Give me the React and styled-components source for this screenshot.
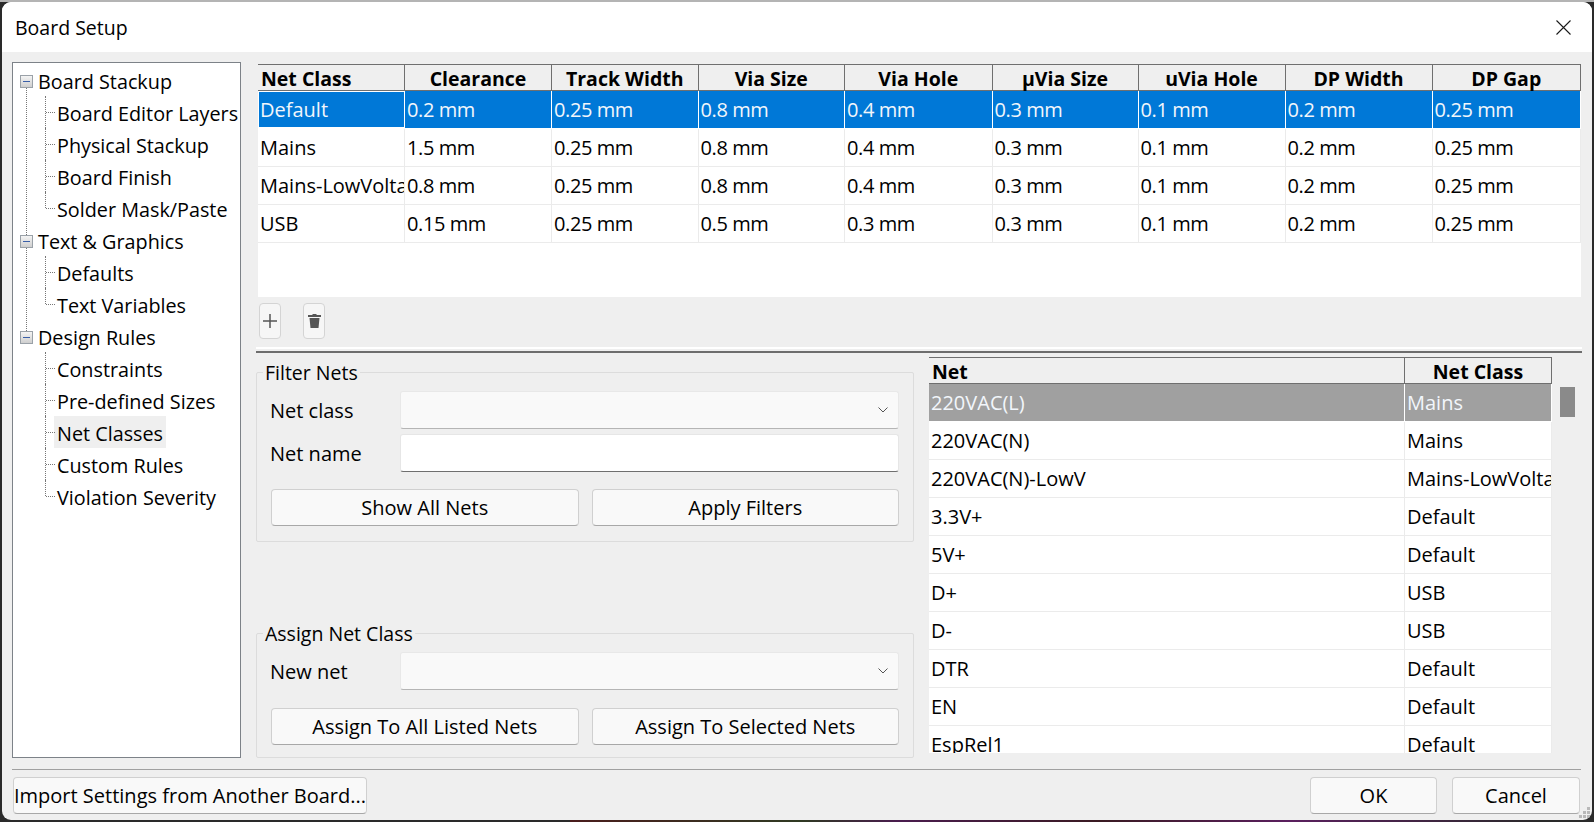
import React from 'react';
import styled, { createGlobalStyle } from 'styled-components';

const GlobalStyle = createGlobalStyle`
  html, body {
    margin: 0;
    height: 100%;
    background: #262626;
    overflow: hidden;
  }
  * { box-sizing: border-box; }
`;

const FONT = `"Open Sans", "Noto Sans", "Liberation Sans", sans-serif`;

const Desktop = styled.div`
  width: 1594px;
  height: 822px;
  padding: 2px;
  background:
    linear-gradient(90deg, transparent 570px, #4a1c1c 570px, #2f3a22 800px, #4a1c4e 900px, #3a1a22 1100px, #5a1f5e 1290px, #2a2a2a 1540px) left bottom / 100% 2px no-repeat,
    linear-gradient(#b4b4b4 0 2px, #2a2a2a 2px);
`;

const Window = styled.div`
  width: 1590px;
  height: 818px;
  display: flex;
  flex-direction: column;
  background: #efefef;
  border-radius: 9px;
  overflow: hidden;
  position: relative;
  font: 400 20px/24px ${FONT};
  color: #000;
`;

const TitleBar = styled.header`
  height: 50px;
  flex: none;
  background: #fff;
  display: flex;
  align-items: center;
  justify-content: space-between;
  padding: 0 21px 0 13px;
`;

const Title = styled.span`
  font-size: 19.5px;
  margin-top: 1px;
`;

const CloseIcon = styled.svg`
  width: 15px;
  height: 15px;
  stroke: #1a1a1a;
  stroke-width: 1.1;
  fill: none;
`;

const Content = styled.div`
  flex: 1;
  min-height: 0;
  display: flex;
  padding: 10px 10px 0 10px;
`;

const Tree = styled.nav`
  width: 229px;
  height: 696px;
  flex: none;
  background: #fff;
  border: 1px solid #7d8288;
  padding: 1px 0 0 0;
  font-size: 19.8px;
`;

const TreeRow = styled.div`
  height: 32px;
  display: flex;
  align-items: flex-start;
  position: relative;
  padding-left: ${(p) => (p.$child ? 44 : 25)}px;
  white-space: nowrap;

  ${(p) => p.$child && `
    &::before {
      content: '';
      position: absolute;
      left: 33px;
      top: 16px;
      width: 9px;
      border-top: 1px dotted #777;
    }
    &::after {
      content: '';
      position: absolute;
      left: 32px;
      top: 0;
      height: ${p.$last ? 16 : 32}px;
      border-left: 1px dotted #777;
    }
  `}
`;

const TreeLabel = styled.span`
  padding: 3px 3px 0;
  margin-left: -3px;
  height: 32px;
  line-height: 29px;
  background: ${(p) => (p.$active ? '#efefef' : 'transparent')};
`;

const TreeGroup = styled.div`
  position: relative;

  ${(p) => !p.$last && `
    &::before {
      content: '';
      position: absolute;
      left: 13px;
      top: 24px;
      bottom: -11px;
      border-left: 1px dotted #777;
    }
  `}
`;

const Toggle = styled.span`
  position: absolute;
  left: 7px;
  top: 11px;
  width: 13px;
  height: 13px;
  border: 1px solid #9aa1a8;
  background: linear-gradient(#f4f4f4, #cfcfcf);
  z-index: 1;

  &::after {
    content: '';
    position: absolute;
    left: 2px;
    right: 2px;
    top: 5px;
    height: 1px;
    background: #3a5fa8;
  }
`;

const Main = styled.div`
  flex: 1;
  min-width: 0;
  margin: 2px 0 0 17px;
  display: flex;
  flex-direction: column;
`;

const GridFrame = styled.div`
  background: #fff;
  overflow: hidden;
  height: ${(p) => p.$height}px;
  width: ${(p) => p.$width}px;
`;

const HeaderRow = styled.div`
  display: grid;
  grid-template-columns: ${(p) => p.$columns};
  height: 27px;
  background: #efefef;
  border-top: 1px solid #6f6f6f;
  border-bottom: 1px solid #6f6f6f;
  border-right: 1px solid #6f6f6f;
`;

const HeaderCell = styled.div`
  font-weight: 700;
  font-size: 19.5px;
  line-height: 23px;
  padding-top: 2px;
  text-align: ${(p) => (p.$left ? 'left' : 'center')};
  padding-left: ${(p) => (p.$left ? 3 : 0)}px;
  border-right: 1px solid #6f6f6f;
  white-space: nowrap;

  &:last-child { border-right: 0; }
`;

const DataRow = styled.div`
  display: grid;
  grid-template-columns: ${(p) => p.$columns};
  height: 38px;
  color: ${(p) => (p.$bg ? '#f2f6fb' : '#000')};
  background: ${(p) => p.$bg || '#fff'};
  border-bottom: 1px solid ${(p) => (p.$bg ? '#fff' : '#ebebeb')};
`;

const Cell = styled.div`
  padding-left: 2px;
  line-height: 37px;
  overflow: hidden;
  white-space: nowrap;
  border-right: 1px solid ${(p) => (p.$light ? '#fff' : '#ebebeb')};
  ${(p) => p.$numeric && 'letter-spacing: -0.4px;'}
  ${(p) => p.$cursor && 'outline: 1px solid #fff; outline-offset: -1px;'}
`;

const Toolbar = styled.div`
  display: flex;
  gap: 22px;
  margin-top: 6px;
  padding-left: 1px;
`;

const IconButton = styled.button`
  width: 22px;
  height: 36px;
  padding: 0;
  display: flex;
  align-items: center;
  justify-content: center;
  background: #f6f6f6;
  border: 1px solid #d4d4d4;
  border-radius: 4px;
`;

const Sash = styled.div`
  height: 2px;
  margin: 12px 0 0 -2px;
  background: #6d6d6d;
  box-shadow: 0 -4px 0 0 #fff;
  flex: none;
`;

const Split = styled.div`
  flex: 1;
  min-height: 0;
  display: flex;
  margin-left: -2px;
  margin-top: 4px;
`;

const LeftPane = styled.div`
  width: 658px;
  flex: none;
  display: flex;
  flex-direction: column;
  justify-content: space-between;
  height: 401px;
`;

const GroupBox = styled.fieldset`
  margin: ${(p) => p.$top}px 0 0 0;
  padding: 18px 14px 0 14px;
  border: 1px solid #dcdcdc;
  border-radius: 2px;
  height: ${(p) => p.$height}px;
  min-width: 0;
  position: relative;
`;

const GroupLegend = styled.legend`
  padding: 0 2px;
  margin-left: -8px;
  height: 0;
  line-height: 0;
  font-size: 19.5px;
`;

const FieldRow = styled.div`
  display: flex;
  align-items: center;
  height: 38px;
  margin-bottom: 5px;
`;

const FieldLabel = styled.label`
  width: 129px;
  flex: none;
  padding-top: 2px;
  margin-left: -1px;
  margin-right: 1px;
`;

const Select = styled.div`
  flex: 1;
  height: 38px;
  background: #f9f9f9;
  border: 1px solid #e8e8e8;
  border-bottom-color: #b5b5b5;
  border-radius: 3px;
  display: flex;
  align-items: center;
  justify-content: flex-end;
  padding-right: 10px;
`;

const TextInput = styled.input`
  flex: 1;
  min-width: 0;
  height: 38px;
  background: #fff;
  border: 1px solid #e6e6e6;
  border-bottom: 1px solid #6f6f6f;
  border-radius: 3px;
  padding: 0;
  outline: none;
`;

const ButtonRow = styled.div`
  display: grid;
  grid-template-columns: 1fr 1fr;
  gap: 13px;
  margin-top: ${(p) => p.$top}px;
`;

const PushButton = styled.button`
  height: 37px;
  width: ${(p) => (p.$width ? `${p.$width}px` : 'auto')};
  padding: 1px 0 0;
  font: 400 20px/24px ${FONT};
  color: #000;
  background: #f9f9f9;
  border: 1px solid #d0d0d0;
  border-bottom-color: #a8a8a8;
  border-radius: 4px;
  white-space: nowrap;
`;

const NetPane = styled.div`
  margin-left: 15px;
  display: flex;
`;

const ScrollTrack = styled.div`
  width: 23px;
  padding: 30px 0 0 8px;
`;

const ScrollThumb = styled.div`
  width: 15px;
  height: 30px;
  background: #8a8a8a;
`;

const Footer = styled.footer`
  flex: none;
  height: 51px;
  margin: 11px 11px 0 10px;
  border-top: 1px solid #a0a0a0;
  display: flex;
  align-items: flex-start;
  justify-content: space-between;
  padding: 7px 1px 0 1px;
`;

const FooterRight = styled.div`
  display: flex;
  gap: 15px;
`;

const Grip = styled.svg`
  position: absolute;
  right: 1px;
  bottom: 1px;
  width: 12px;
  height: 12px;
  fill: #b8b8b8;
`;

const ChevronIcon = () => (
  <svg width="10" height="6" viewBox="0 0 10 6" fill="none" stroke="#555" strokeWidth="1">
    <path d="M0.5 0.5 L5 5 L9.5 0.5" />
  </svg>
);

const treeData = [
  { label: 'Board Stackup', items: ['Board Editor Layers', 'Physical Stackup', 'Board Finish', 'Solder Mask/Paste'] },
  { label: 'Text & Graphics', items: ['Defaults', 'Text Variables'] },
  { label: 'Design Rules', items: ['Constraints', 'Pre-defined Sizes', 'Net Classes', 'Custom Rules', 'Violation Severity'] },
];

const classColumns = '147px 147px 146.5px 146.5px 147.5px 146px 147px 147px 1fr';
const classHeaders = ['Net Class', 'Clearance', 'Track Width', 'Via Size', 'Via Hole', 'µVia Size', 'uVia Hole', 'DP Width', 'DP Gap'];
const classRows = [
  ['Default', '0.2 mm', '0.25 mm', '0.8 mm', '0.4 mm', '0.3 mm', '0.1 mm', '0.2 mm', '0.25 mm'],
  ['Mains', '1.5 mm', '0.25 mm', '0.8 mm', '0.4 mm', '0.3 mm', '0.1 mm', '0.2 mm', '0.25 mm'],
  ['Mains-LowVoltage', '0.8 mm', '0.25 mm', '0.8 mm', '0.4 mm', '0.3 mm', '0.1 mm', '0.2 mm', '0.25 mm'],
  ['USB', '0.15 mm', '0.25 mm', '0.5 mm', '0.3 mm', '0.3 mm', '0.1 mm', '0.2 mm', '0.25 mm'],
];

const netColumns = '476px 1fr';
const netRows = [
  ['220VAC(L)', 'Mains'],
  ['220VAC(N)', 'Mains'],
  ['220VAC(N)-LowV', 'Mains-LowVoltage'],
  ['3.3V+', 'Default'],
  ['5V+', 'Default'],
  ['D+', 'USB'],
  ['D-', 'USB'],
  ['DTR', 'Default'],
  ['EN', 'Default'],
  ['EspRel1', 'Default'],
];

export default function App() {
  return (
    <Desktop>
      <GlobalStyle />
      <Window>
        <TitleBar>
          <Title>Board Setup</Title>
          <CloseIcon viewBox="0 0 15 15">
            <path d="M0.5 0.5 L14.5 14.5 M14.5 0.5 L0.5 14.5" />
          </CloseIcon>
        </TitleBar>

        <Content>
          <Tree>
            {treeData.map((group, g) => (
              <TreeGroup key={group.label} $last={g === treeData.length - 1}>
                <Toggle />
                <TreeRow>
                  <TreeLabel>{group.label}</TreeLabel>
                </TreeRow>
                {group.items.map((item, i) => (
                  <TreeRow key={item} $child $last={i === group.items.length - 1}>
                    <TreeLabel $active={item === 'Net Classes'}>{item}</TreeLabel>
                  </TreeRow>
                ))}
              </TreeGroup>
            ))}
          </Tree>

          <Main>
            <GridFrame $height={233} $width={1323}>
              <HeaderRow $columns={classColumns}>
                {classHeaders.map((h, i) => (
                  <HeaderCell key={h} $left={i === 0}>{h}</HeaderCell>
                ))}
              </HeaderRow>
              {classRows.map((row, r) => (
                <DataRow key={row[0]} $columns={classColumns} $bg={r === 0 ? '#0078d7' : undefined}>
                  {row.map((c, i) => (
                    <Cell key={i} $light={r === 0} $numeric={i > 0} $cursor={r === 0 && i === 0}>{c}</Cell>
                  ))}
                </DataRow>
              ))}
            </GridFrame>

            <Toolbar>
              <IconButton aria-label="Add net class">
                <svg width="14" height="14" viewBox="0 0 14 14" stroke="#555" strokeWidth="1.5" fill="none">
                  <path d="M7 0 V14 M0 7 H14" />
                </svg>
              </IconButton>
              <IconButton aria-label="Delete net class">
                <svg width="13" height="14" viewBox="0 0 13 14" fill="#555">
                  <path d="M4.5 0 H8.5 V1 H13 V3 H0 V1 H4.5 Z M1.5 4 H11.5 L10.5 14 H2.5 Z" />
                </svg>
              </IconButton>
            </Toolbar>

            <Sash />

            <Split>
              <LeftPane>
                <GroupBox $height={170} $top={15}>
                  <GroupLegend>Filter Nets</GroupLegend>
                  <FieldRow>
                    <FieldLabel>Net class</FieldLabel>
                    <Select><ChevronIcon /></Select>
                  </FieldRow>
                  <FieldRow>
                    <FieldLabel>Net name</FieldLabel>
                    <TextInput />
                  </FieldRow>
                  <ButtonRow $top={17}>
                    <PushButton>Show All Nets</PushButton>
                    <PushButton>Apply Filters</PushButton>
                  </ButtonRow>
                </GroupBox>
                <GroupBox $height={125} $top={0}>
                  <GroupLegend>Assign Net Class</GroupLegend>
                  <FieldRow>
                    <FieldLabel>New net</FieldLabel>
                    <Select><ChevronIcon /></Select>
                  </FieldRow>
                  <ButtonRow $top={18}>
                    <PushButton>Assign To All Listed Nets</PushButton>
                    <PushButton>Assign To Selected Nets</PushButton>
                  </ButtonRow>
                </GroupBox>
              </LeftPane>

              <NetPane>
                <GridFrame $height={396} $width={623}>
                  <HeaderRow $columns={netColumns}>
                    <HeaderCell $left>Net</HeaderCell>
                    <HeaderCell>Net Class</HeaderCell>
                  </HeaderRow>
                  {netRows.map((row, r) => (
                    <DataRow key={row[0]} $columns={netColumns} $bg={r === 0 ? '#a0a0a0' : undefined}>
                      <Cell $light={r === 0}>{row[0]}</Cell>
                      <Cell $light={r === 0}>{row[1]}</Cell>
                    </DataRow>
                  ))}
                </GridFrame>
                <ScrollTrack>
                  <ScrollThumb />
                </ScrollTrack>
              </NetPane>
            </Split>
          </Main>
        </Content>

        <Footer>
          <PushButton $width={354}>Import Settings from Another Board...</PushButton>
          <FooterRight>
            <PushButton $width={127}>OK</PushButton>
            <PushButton $width={128}>Cancel</PushButton>
          </FooterRight>
        </Footer>

        <Grip viewBox="0 0 12 12">
          <rect x="8" y="0" width="3" height="3" />
          <rect x="4" y="4" width="3" height="3" />
          <rect x="8" y="4" width="3" height="3" />
          <rect x="0" y="8" width="3" height="3" />
          <rect x="4" y="8" width="3" height="3" />
          <rect x="8" y="8" width="3" height="3" />
        </Grip>
      </Window>
    </Desktop>
  );
}
